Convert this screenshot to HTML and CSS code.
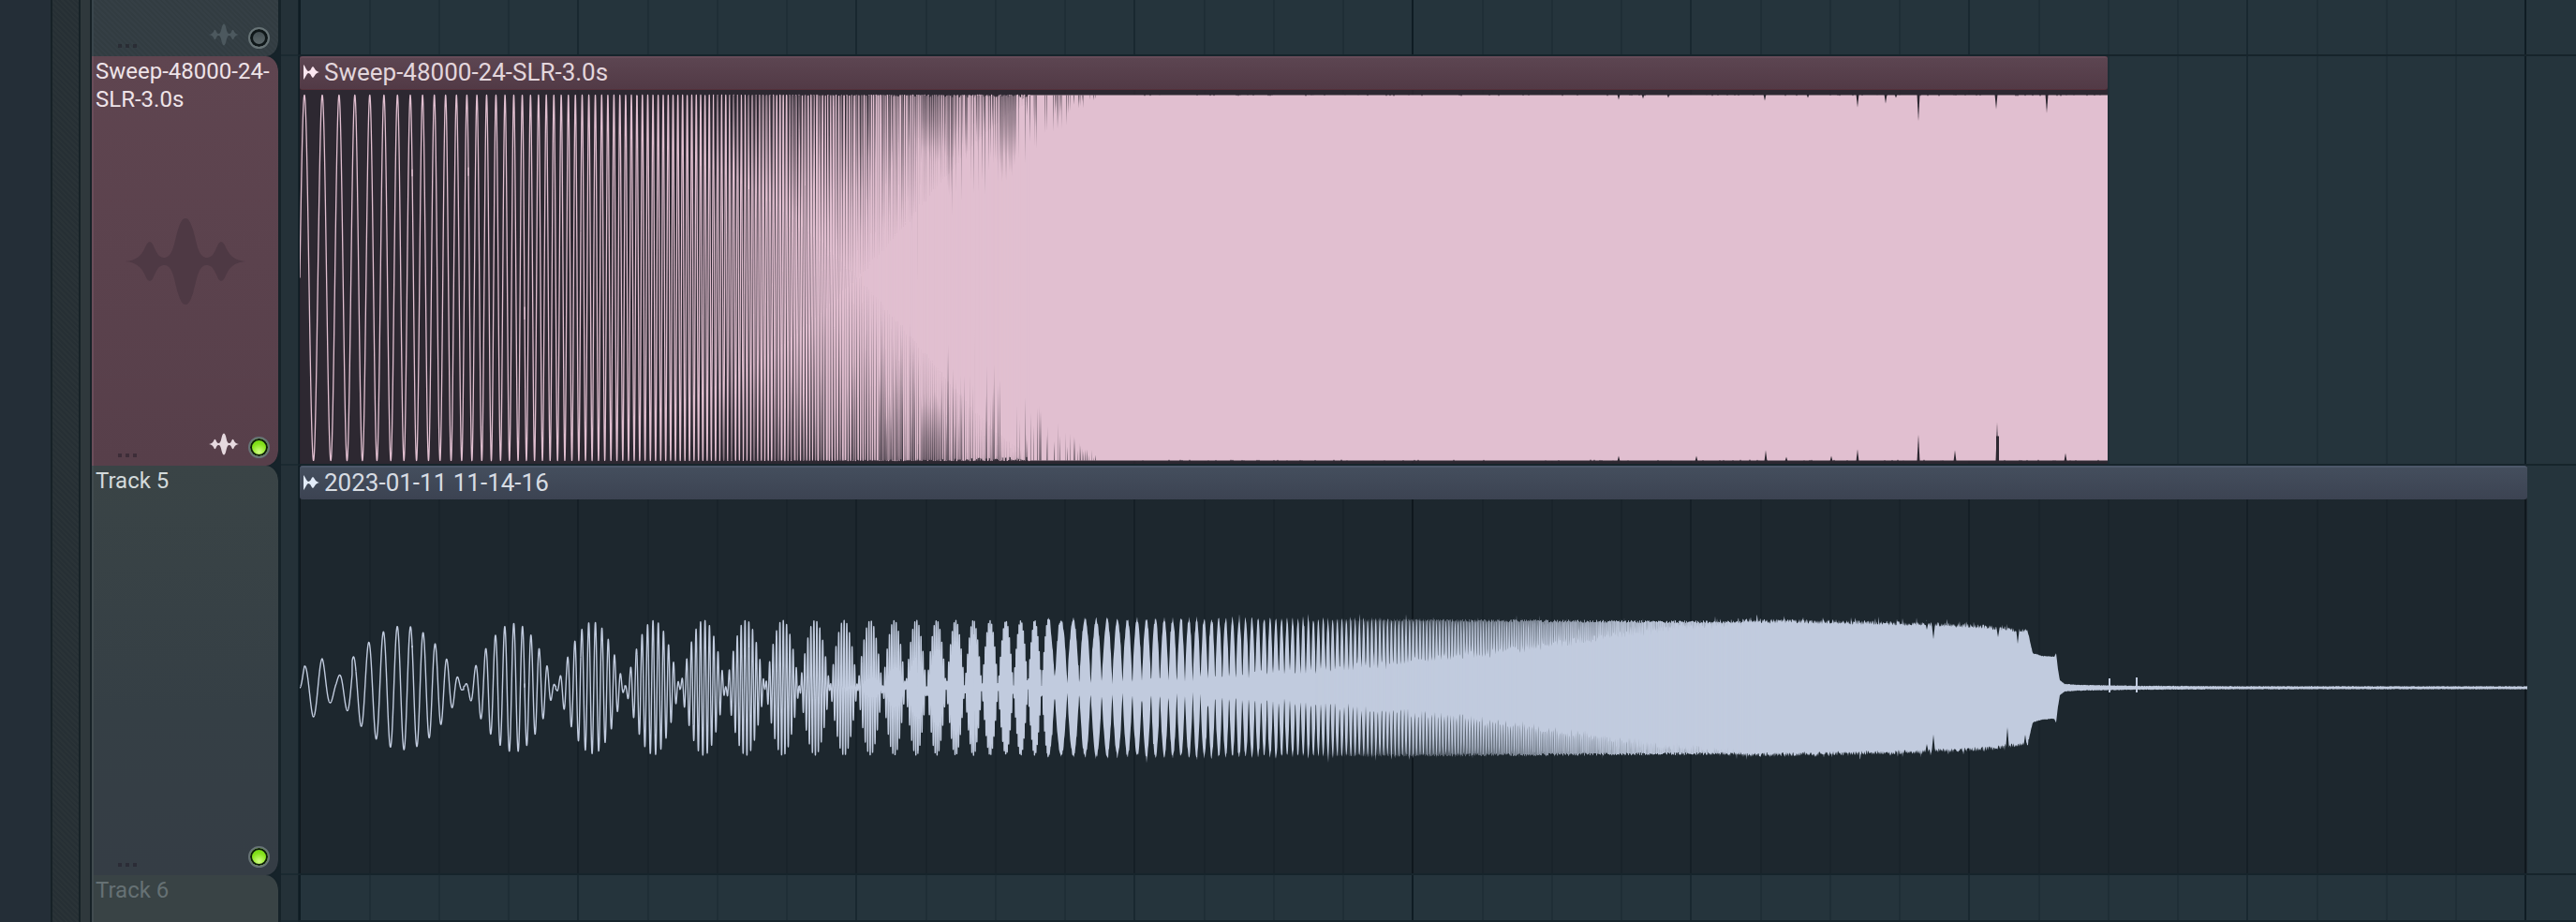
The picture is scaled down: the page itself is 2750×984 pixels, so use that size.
FILE: index.html
```html
<!DOCTYPE html>
<html lang="en">
<head>
<meta charset="utf-8">
<title>Playlist</title>
<link rel="stylesheet" href="styles.css">
</head>
<body>
<svg class="defs" aria-hidden="true">
  <symbol id="wave" viewBox="0 0 128 92">
    <path d="M0 46C12 45 17 39 20 33C23 27 23 26 26 25C29 26 29 28 32 34C35 40 37 42 42 42C51 41 52 25 56 12C59 3 61 0 64 0C67 0 69 3 72 12C76 25 77 41 86 42C91 42 93 40 96 34C99 28 99 26 102 25C105 26 105 27 108 33C111 39 116 45 128 46C116 47 111 53 108 59C105 65 105 66 102 67C99 66 99 64 96 58C93 52 91 50 86 50C77 51 76 67 72 80C69 89 67 92 64 92C61 92 59 89 56 80C52 67 51 51 42 50C37 50 35 52 32 58C29 64 29 66 26 67C23 66 23 65 20 59C17 53 12 47 0 46Z"/>
  </symbol>
  <symbol id="half-wave" viewBox="0 0 17 16">
    <path d="M0 0C2 2 3 6 5 7C8 7 8 3 10 2C12 3 12 7 17 8C12 9 12 13 10 14C8 13 8 9 5 9C3 10 2 14 0 16Z"/>
  </symbol>
</svg>

<main class="playlist">
  <div class="rail rail-picker"></div>
  <div class="rail rail-hatch"></div>
  <div class="rail rail-edge"></div>

  <div class="tracks">
    <section class="track track-cut">
      <header class="head head-muted">
        <div class="tools">
          <button class="more" aria-label="Track options"><i></i><i></i><i></i></button>
          <svg class="mode"><use href="#wave"/></svg>
          <button class="led led-off" aria-label="Enable track"></button>
        </div>
      </header>
      <div class="gutter"></div>
      <div class="lane"></div>
    </section>

    <section class="track">
      <header class="head head-pink">
        <h2 class="name">Sweep-48000-24-SLR-3.0s</h2>
        <svg class="emblem"><use href="#wave"/></svg>
        <div class="tools">
          <button class="more" aria-label="Track options"><i></i><i></i><i></i></button>
          <svg class="mode"><use href="#wave"/></svg>
          <button class="led" aria-label="Mute track"></button>
        </div>
      </header>
      <div class="gutter"></div>
      <div class="lane">
        <article class="clip clip-pink">
          <h3 class="clip-title"><svg class="clip-icon"><use href="#half-wave"/></svg>Sweep-48000-24-SLR-3.0s</h3>
          <canvas class="wave" id="sweep" width="1930" height="399"></canvas>
        </article>
      </div>
    </section>

    <section class="track">
      <header class="head">
        <h2 class="name">Track 5</h2>
        <div class="tools">
          <button class="more" aria-label="Track options"><i></i><i></i><i></i></button>
          <button class="led" aria-label="Mute track"></button>
        </div>
      </header>
      <div class="gutter"></div>
      <div class="lane">
        <article class="clip clip-blue">
          <h3 class="clip-title"><svg class="clip-icon"><use href="#half-wave"/></svg>2023-01-11 11-14-16</h3>
          <canvas class="wave" id="recording" width="2378" height="399"></canvas>
        </article>
      </div>
    </section>

    <section class="track track-rest">
      <header class="head head-dim">
        <h2 class="name">Track 6</h2>
      </header>
      <div class="gutter"></div>
      <div class="lane"></div>
    </section>
  </div>
</main>
<script src="waves.js"></script>
</body>
</html>
```

FILE: styles.css
```css
* {
  box-sizing: border-box;
}

body {
  margin: 0;
  overflow: hidden;
  background: #25343d;
  font-family: Roboto, "Liberation Sans", sans-serif;
}

button {
  padding: 0;
  border: 0;
  background: none;
}

.defs {
  position: absolute;
  width: 0;
  height: 0;
}

.playlist {
  display: flex;
  height: 100vh;
}

.rail {
  flex: none;
  border-right: 2px solid #162126;
}

.rail-picker {
  width: 56px;
  background: #242e37;
}

.rail-hatch {
  width: 30px;
  background: repeating-linear-gradient(45deg, #262f34 0 2px, #2a3337 2px 4px);
}

.rail-edge {
  width: 12px;
  background: #2f383c;
}

.tracks {
  flex: 1;
  min-width: 0;
  display: flex;
  flex-direction: column;
}

.track {
  flex: none;
  display: flex;
  height: 437px;
  background: #16232a;
}

.track-cut {
  height: 60px;
}

.track-rest {
  flex: 1;
  height: auto;
}

.head {
  flex: none;
  display: flex;
  flex-direction: column;
  width: 202px;
  padding: 0 4px 0 2px;
  border-left: 2px solid #414b4f;
  border-right: 3px solid #162329;
  border-radius: 0 16px 16px 0;
  background: linear-gradient(#3a4446, #353f45 60%, #353d45);
  background-clip: padding-box;
  color: #d3dadb;
  position: relative;
}

.head-muted {
  border-left-color: #3a464c;
  border-top-right-radius: 0;
  background: repeating-linear-gradient(45deg, #323c41 0 2px, #353f45 2px 4px);
  background-clip: padding-box;
}

.head-pink {
  border-left-color: #6a4d5a;
  background: linear-gradient(#5f4550, #573f4a);
  background-clip: padding-box;
  color: #eee3e8;
}

.head-dim {
  border-bottom-right-radius: 0;
  background: #394345;
  background-clip: padding-box;
  color: #667174;
}

.name {
  margin: 0;
  padding-top: 1px;
  font-size: 24px;
  line-height: 30px;
  font-weight: 400;
  overflow-wrap: anywhere;
}

.emblem {
  position: absolute;
  left: 34px;
  top: 173px;
  width: 128px;
  height: 92px;
  fill: #4e3944;
}

.tools {
  display: flex;
  align-items: center;
  gap: 10px;
  height: 35px;
  margin-top: auto;
  padding: 0 5px 5px 24px;
}

.more {
  display: flex;
  gap: 4px;
  margin: 18px auto 0 0;
}

.more i {
  width: 4px;
  height: 4px;
  background: rgba(30, 25, 35, 0.45);
}

.mode {
  width: 32px;
  height: 24px;
  margin-bottom: 6px;
  fill: #4c585e;
}

.head-pink .mode {
  fill: #e6d9df;
}

.led {
  width: 23px;
  height: 23px;
  border: 2px solid #677376;
  border-radius: 50%;
  background: radial-gradient(circle at 50% 75%, #d0ff80, #86e21c 50%, #62cf04);
  box-shadow: inset 0 0 0 2px #0d1c0a;
}

.led-off {
  background: linear-gradient(#3d484c, #626d70);
  box-shadow: inset 0 0 0 3px #0f1719;
}

.gutter {
  flex: none;
  width: 19px;
  border-right: 1px solid #142229;
  border-bottom: 2px solid #1b2a31;
  background: #243138;
}

/* One bar of four beats is 297px; every fourth bar line is stronger. */
.lane {
  flex: 1;
  min-width: 0;
  overflow: hidden;
  border-bottom: 2px solid #16242b;
  padding-left: 1px;
  background:
    linear-gradient(90deg, #0f1c23 2px, transparent 2px) 0 0 / 1188px 100%,
    linear-gradient(90deg,
      #192830 2px, transparent 2px 75px,
      #1f2e36 75px 77px, transparent 77px 149px,
      #1f2e36 149px 151px, transparent 151px 223px,
      #1f2e36 223px 225px, transparent 225px) 0 0 / 297px 100%,
    #25343c;
}

.clip {
  display: flex;
  flex-direction: column;
  height: 437px;
  border-bottom: 2px solid #05090c;
}

.clip-pink {
  width: 1930px;
  background: rgba(46, 39, 48, 0.86);
}

.clip-blue {
  width: 2378px;
  background: rgba(14, 16, 18, 0.33);
}

.clip-title {
  flex: none;
  display: flex;
  align-items: center;
  gap: 5px;
  height: 36px;
  margin: 0;
  padding: 0 4px 3px;
  border-radius: 3px;
  font-size: 26px;
  line-height: 30px;
  font-weight: 400;
}

.clip-pink .clip-title {
  border-top: 2px solid #674c59;
  border-bottom: 1px solid #55303a;
  background: linear-gradient(#5c4551, #523a46);
  color: #e3d6dc;
}

.clip-blue .clip-title {
  border-top: 2px solid #4d586a;
  background: linear-gradient(#444e5d, #3c4352);
  color: #d7dce3;
}

.clip-icon {
  width: 17px;
  height: 16px;
  fill: #fbe6f0;
}

.clip-blue .clip-icon {
  fill: #e2ebf8;
}

.wave {
  flex: none;
  display: block;
}
```

FILE: waves.js
```js
// Exponential sweep: number of cycles completed at x pixels.
const K = 0.0034;
const CYCLES = 14.686;
const phase = x => 2 * Math.PI * CYCLES * (Math.exp(K * x) - 1);

let seed = 7;
const rand = () => (seed = (seed * 16807) % 2147483647) / 2147483647;

function context(id, colour, lineWidth) {
  const ctx = document.getElementById(id).getContext('2d');
  ctx.fillStyle = ctx.strokeStyle = colour;
  ctx.lineWidth = lineWidth;
  ctx.lineJoin = 'round';
  return ctx;
}

function strokeWave(ctx, from, to, mid, value) {
  ctx.beginPath();
  for (let x = from; x <= to; x += 0.1) ctx.lineTo(x, mid - value(x));
  ctx.stroke();
}

// Piecewise linear lookup in [[x, y], ...].
function lookup(points, x) {
  let i = 1;
  while (i < points.length - 1 && points[i][0] < x) i++;
  const [x0, y0] = points[i - 1], [x1, y1] = points[i];
  const t = Math.max(0, Math.min(1, (x - x0) / (x1 - x0)));
  return y0 + (y1 - y0) * t;
}

function drawSweep() {
  const ctx = context('sweep', '#e1bfd0', 1.3);
  const mid = 200.5, amp = 195, solid = 780;
  for (let x = 0; x < solid; x += 60) {
    strokeWave(ctx, x, Math.min(x + 60.1, solid), mid, t => amp * Math.sin(phase(t)));
  }
  ctx.fillRect(solid - 2, mid - amp, 1930 - solid + 2, amp * 2);

  for (let x = 480; x < solid; x++) {
    ctx.globalAlpha = rand() * rand() * Math.min(1, (x - 440) / 200);
    ctx.fillRect(x, mid - amp, 1, amp * 2);
  }
  ctx.globalAlpha = 1;

  ctx.globalCompositeOperation = 'destination-out';
  const fade = (x, depth, alpha, top) => {
    const edge = top ? mid - amp : mid + amp;
    const tip = top ? edge + depth : edge - depth;
    const shade = ctx.createLinearGradient(0, edge, 0, tip);
    shade.addColorStop(0, `rgba(0, 0, 0, ${alpha})`);
    shade.addColorStop(0.4, `rgba(0, 0, 0, ${alpha * 0.7})`);
    shade.addColorStop(1, 'rgba(0, 0, 0, 0)');
    ctx.fillStyle = shade;
    ctx.fillRect(x, Math.min(edge, tip), 1, depth);
  };
  const reach = [[440, 190], [600, 170], [700, 130], [760, 90], [800, 50], [850, 8]];
  for (let x = 440; x < 850; x++) {
    for (const top of [true, false]) {
      if (x >= 663 && x <= 683) fade(x, 55 + rand() * 20, 0.45, top);
      else if (x >= 749 && x <= 764) {
        if (top) fade(x, 60 + rand() * 35, 0.5, top);
      } else if (rand() < (x > 770 ? 0.35 : 0.45)) {
        fade(x, lookup(reach, x) * (0.3 + rand() * 0.7), 0.25 + rand() * 0.4, top);
      }
    }
  }

  ctx.fillStyle = '#000';
  const notch = (x, depth, width, top) => {
    const edge = top ? mid - amp - 1 : mid + amp + 1;
    ctx.beginPath();
    ctx.moveTo(x - width / 2, edge);
    ctx.lineTo(x, edge + (top ? depth : -depth));
    ctx.lineTo(x + width / 2, edge);
    ctx.fill();
  };
  for (let x = 900; x < 1928; x += 2) {
    if (rand() < 0.3) notch(x, 1 + rand() * 1.5, 2, rand() < 0.5);
  }
  [[1408, 6], [1434, 5], [1461, 4], [1564, 7], [1610, 4], [1663, 14], [1693, 10],
   [1704, 4], [1728, 29], [1811, 16], [1865, 20]].forEach(([x, d]) => notch(x, d, 3, true));
  [[1408, 6], [1491, 6], [1565, 12], [1587, 5], [1635, 6], [1663, 13], [1728, 29],
   [1767, 12], [1885, 9]].forEach(([x, d]) => notch(x, d, 3, false));
  notch(1812, 42, 3, false);
  ctx.fillRect(1811, mid + amp - 26, 3, 27);
}

function drawRecording() {
  const ctx = context('recording', '#c1cbde', 1.4);
  const mid = 201;
  const start = [[0, 0], [5, 23], [14, 31], [24, 31], [32, 17], [39, 9], [47, 20], [56, 31]];
  const comb = x => (Math.exp(K * x) - 1.813) / 0.72;
  const peak = x => lookup([[60, 65], [250, 69], [400, 72]], x);
  const envelope = x => x < 56 ? lookup(start, x)
    : Math.max(2, peak(x) * Math.abs(Math.sin(Math.PI * comb(x))));
  const value = x => {
    const u = comb(x);
    const drift = x < 56 ? 0 : 0.6 * Math.PI * (u - Math.floor(u) - 0.5);
    return envelope(x) * Math.sin(phase(x) - drift);
  };
  const dense = 800;
  for (let x = 0; x < dense; x += 60) {
    strokeWave(ctx, x, Math.min(x + 60.1, dense), mid, value);
  }

  const outer = [[790, 73], [1000, 74], [1300, 73], [1600, 71], [1740, 68], [1800, 65],
    [1835, 61], [1845, 60], [1847, 50], [1850, 37], [1860, 34], [1873, 33], [1875, 37],
    [1877, 20], [1879, 8], [1884, 4], [1900, 3], [1960, 2], [2080, 1.5], [2378, 1.5]];
  const inner = [[790, 6], [980, 10], [1080, 18], [1180, 26], [1280, 38], [1380, 52],
    [1460, 64], [1540, 70]];
  const side = sign => {
    const points = [];
    for (let x = dense - 2; x <= 2378; x += 0.5) {
      const top = lookup(outer, x);
      let a = top;
      if (x < 1540) {
        const floor = lookup(inner, x) + rand() * 8 - 4;
        const lobe = Math.pow(Math.abs(Math.sin(Math.PI * comb(x))), 0.8);
        a = Math.max(Math.min(floor, top), top * lobe);
      }
      if (x < 1846) a += (rand() - 0.5) * 5 + (rand() < 0.03 ? 5 : 0);
      else a += (rand() - 0.5) * 0.8;
      points.push([x, mid - sign * a]);
    }
    return points;
  };
  ctx.beginPath();
  side(1).concat(side(-1).reverse()).forEach(([x, y]) => ctx.lineTo(x, y));
  ctx.fill();

  // The gaps between lobes fade out as they get narrower than a pixel.
  for (let x = 1080; x < 1560; x++) {
    const reach = lookup(outer, x) - rand() * 3;
    ctx.globalAlpha = Math.min(1, (x - 1080) / 360) * (0.8 + rand() * 0.2);
    ctx.fillRect(x, mid - reach, 1, reach * 2);
  }
  ctx.globalAlpha = 1;
  ctx.fillRect(1931, mid - 10, 2, 15);
  ctx.fillRect(1960, mid - 11, 2, 16);

  ctx.globalCompositeOperation = 'destination-out';
  [[1737, -62, 9], [1744, -52, 18], [1744, 50, 20], [1737, 60, 10], [1823, 42, 26],
   [1834, -47, 18], [1813, -54, 12], [1842, 50, 14]].forEach(([x, tip, depth]) => {
    const base = tip + Math.sign(tip) * depth;
    ctx.beginPath();
    ctx.moveTo(x - 2, mid + base);
    ctx.lineTo(x, mid + tip);
    ctx.lineTo(x + 2, mid + base);
    ctx.fill();
  });
}

drawSweep();
drawRecording();
```
